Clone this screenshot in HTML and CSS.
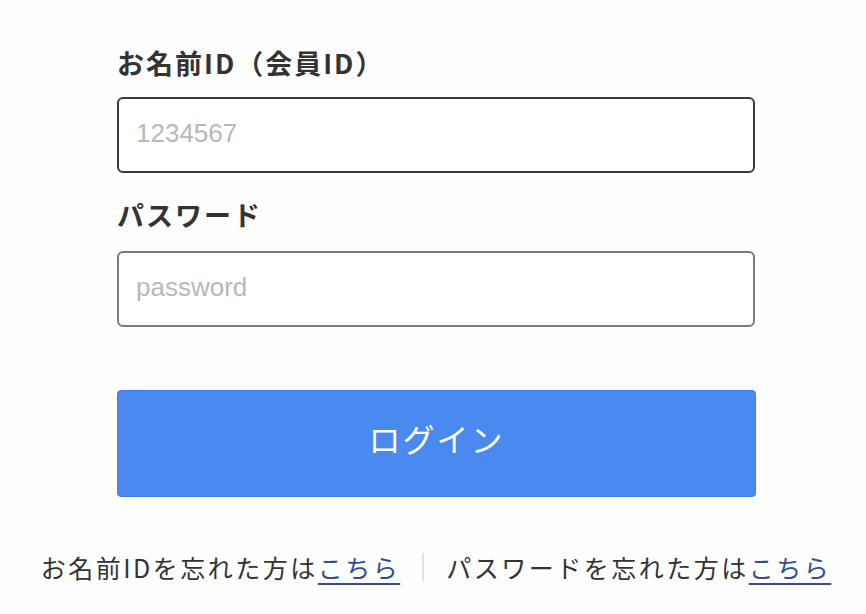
FILE: index.html
```html
<!DOCTYPE html>
<html lang="ja">
<head>
<meta charset="utf-8">
<link rel="stylesheet" href="styles.css">
</head>
<body>
<main class="page">
  <form class="login-form">
    <label class="field-label" for="member-id">お名前ID（会員ID）</label>
    <input class="field-input field-input--id" id="member-id" type="text" placeholder="1234567">
    <label class="field-label field-label--pw" for="password">パスワード</label>
    <input class="field-input field-input--pw" id="password" type="password" placeholder="password">
    <button class="login-button" type="button">ログイン</button>
  </form>
  <div class="help-links">
    <span class="help-item">お名前IDを忘れた方は<a class="help-link" href="#">こちら</a></span>
    <span class="help-sep"></span>
    <span class="help-item">パスワードを忘れた方は<a class="help-link" href="#">こちら</a></span>
  </div>
</main>
</body>
</html>
```
FILE: styles.css
```css
html, body {
  margin: 0;
  padding: 0;
  background: #fefefe;
}
body {
  font-family: "Noto Sans CJK JP", "Noto Sans", sans-serif;
  color: #333;
}
.page {
  width: 866px;
  height: 614px;
  overflow: hidden;
}
.login-form {
  display: flex;
  flex-direction: column;
  padding: 47px 0 0 117px;
  width: 638px;
}
.field-label {
  font-size: 27px;
  font-weight: 700;
  line-height: 32px;
  letter-spacing: 2px;
  color: #333;
  margin-bottom: 18px;
}
.field-label--pw {
  margin-top: 26px;
  margin-bottom: 20px;
}
.field-input {
  box-sizing: border-box;
  width: 638px;
  height: 76px;
  border-radius: 6px;
  padding: 0 17px 4px;
  font-family: "Liberation Sans", Arial, sans-serif;
  font-size: 26px;
  color: #333;
  background: #fff;
  outline: none;
  margin: 0;
}
.field-input--id {
  border: 2px solid #3a3a3a;
}
.field-input--pw {
  border: 2px solid #7a7a7a;
}
.field-input::placeholder {
  color: #b8b8b8;
}
.login-button {
  margin-top: 63px;
  box-sizing: border-box;
  width: 639px;
  height: 107px;
  border: 1px solid #3f7fe8;
  border-radius: 4px;
  background: #4a89ef;
  color: #fff;
  font-family: "Noto Sans CJK JP", "Noto Sans", sans-serif;
  font-size: 32px;
  font-weight: 400;
  letter-spacing: 2px;
  padding: 0 0 12px;
}
.help-links {
  display: flex;
  justify-content: center;
  align-items: center;
  margin-top: 54px;
  padding-left: 6px;
  font-size: 25px;
  line-height: 32px;
  letter-spacing: 2.5px;
  color: #333;
}
.help-item {
  white-space: nowrap;
}
.help-link {
  color: #2e4f94;
  text-decoration: underline;
  text-underline-offset: 5px;
  text-decoration-thickness: 2px;
}
.help-sep {
  display: inline-block;
  width: 2px;
  height: 28px;
  background: #e2e2e2;
  margin: 0 22px 0 22px;
}
```
